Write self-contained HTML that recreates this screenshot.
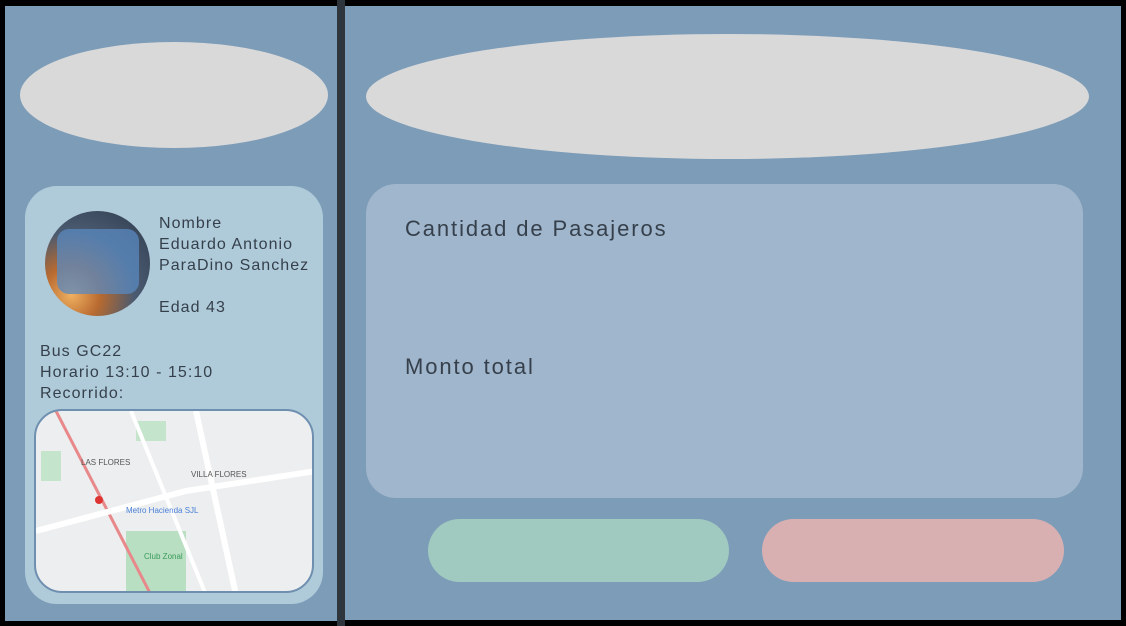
<!DOCTYPE html>
<html><head><style>
body{margin:0;width:1126px;height:626px;background:#000;position:relative;overflow:hidden;font-family:"Liberation Sans",sans-serif;color:#36404c}
.a{position:absolute}
</style></head><body>
<div class="a" style="left:337px;top:0;width:8px;height:626px;background:#2f353d"></div>
<div class="a" style="left:5px;top:6px;width:332px;height:615px;background:#7d9cb8"></div>
<div class="a" style="left:345px;top:6px;width:776px;height:614px;background:#7d9cb8"></div>
<div class="a" style="left:20px;top:42px;width:308px;height:106px;border-radius:50%;background:#d9d9d9"></div>
<div class="a" style="left:366px;top:34px;width:723px;height:125px;border-radius:50%;background:#d9d9d9"></div>
<div class="a" style="left:25px;top:186px;width:298px;height:418px;border-radius:32px;background:#afcbd9"></div>
<div class="a" style="left:45px;top:211px;width:105px;height:105px;border-radius:50%;overflow:hidden;background:radial-gradient(circle at 25% 80%,#f0b060 0,#b86a30 25%,#4a5a70 55%,#2e3a4c 100%)">
<div class="a" style="left:12px;top:18px;width:82px;height:65px;border-radius:12px;background:#5a8ac0;opacity:.75"></div></div>
<div class="a" style="left:159px;top:213px;font-size:16px;line-height:21px;letter-spacing:1.05px">Nombre<br>Eduardo Antonio<br>ParaDino Sanchez<br><br>Edad 43</div>
<div class="a" style="left:40px;top:341px;font-size:16px;line-height:21px;letter-spacing:1.05px">Bus GC22<br>Horario 13:10 - 15:10<br>Recorrido:</div>
<div class="a" style="left:34px;top:409px;width:280px;height:184px;border-radius:28px;border:2px solid #6f8fb0;box-sizing:border-box;overflow:hidden;background:#eceeef">
<svg width="280" height="184" viewBox="0 0 280 184">
<rect x="90" y="120" width="60" height="64" fill="#b8dfc2"/>
<rect x="5" y="40" width="20" height="30" fill="#c4e4cc"/>
<rect x="100" y="10" width="30" height="20" fill="#c4e4cc"/>
<path d="M20 0 L115 184" stroke="#e8888a" stroke-width="3" fill="none"/>
<path d="M0 120 L150 80 L280 60" stroke="#fff" stroke-width="6" fill="none"/>
<path d="M160 0 L200 184" stroke="#fff" stroke-width="6" fill="none"/>
<path d="M95 0 L170 184" stroke="#fff" stroke-width="4" fill="none"/>
<text x="45" y="54" font-size="8" fill="#555">LAS FLORES</text>
<text x="155" y="66" font-size="8" fill="#555">VILLA FLORES</text>
<text x="90" y="102" font-size="8" fill="#4a80d8">Metro Hacienda SJL</text>
<text x="108" y="148" font-size="8" fill="#3a9a5a">Club Zonal</text>
<circle cx="63" cy="89" r="4" fill="#d33"/>
</svg></div>
<div class="a" style="left:366px;top:184px;width:717px;height:314px;border-radius:30px;background:#a0b6cc"></div>
<div class="a" style="left:405px;top:216px;font-size:22px;letter-spacing:1.9px">Cantidad de Pasajeros</div>
<div class="a" style="left:405px;top:354px;font-size:22px;letter-spacing:1.9px">Monto total</div>
<div class="a" style="left:428px;top:519px;width:301px;height:63px;border-radius:32px;background:#a0c9c0"></div>
<div class="a" style="left:762px;top:519px;width:302px;height:63px;border-radius:32px;background:#d9b0b2"></div>
</body></html>
